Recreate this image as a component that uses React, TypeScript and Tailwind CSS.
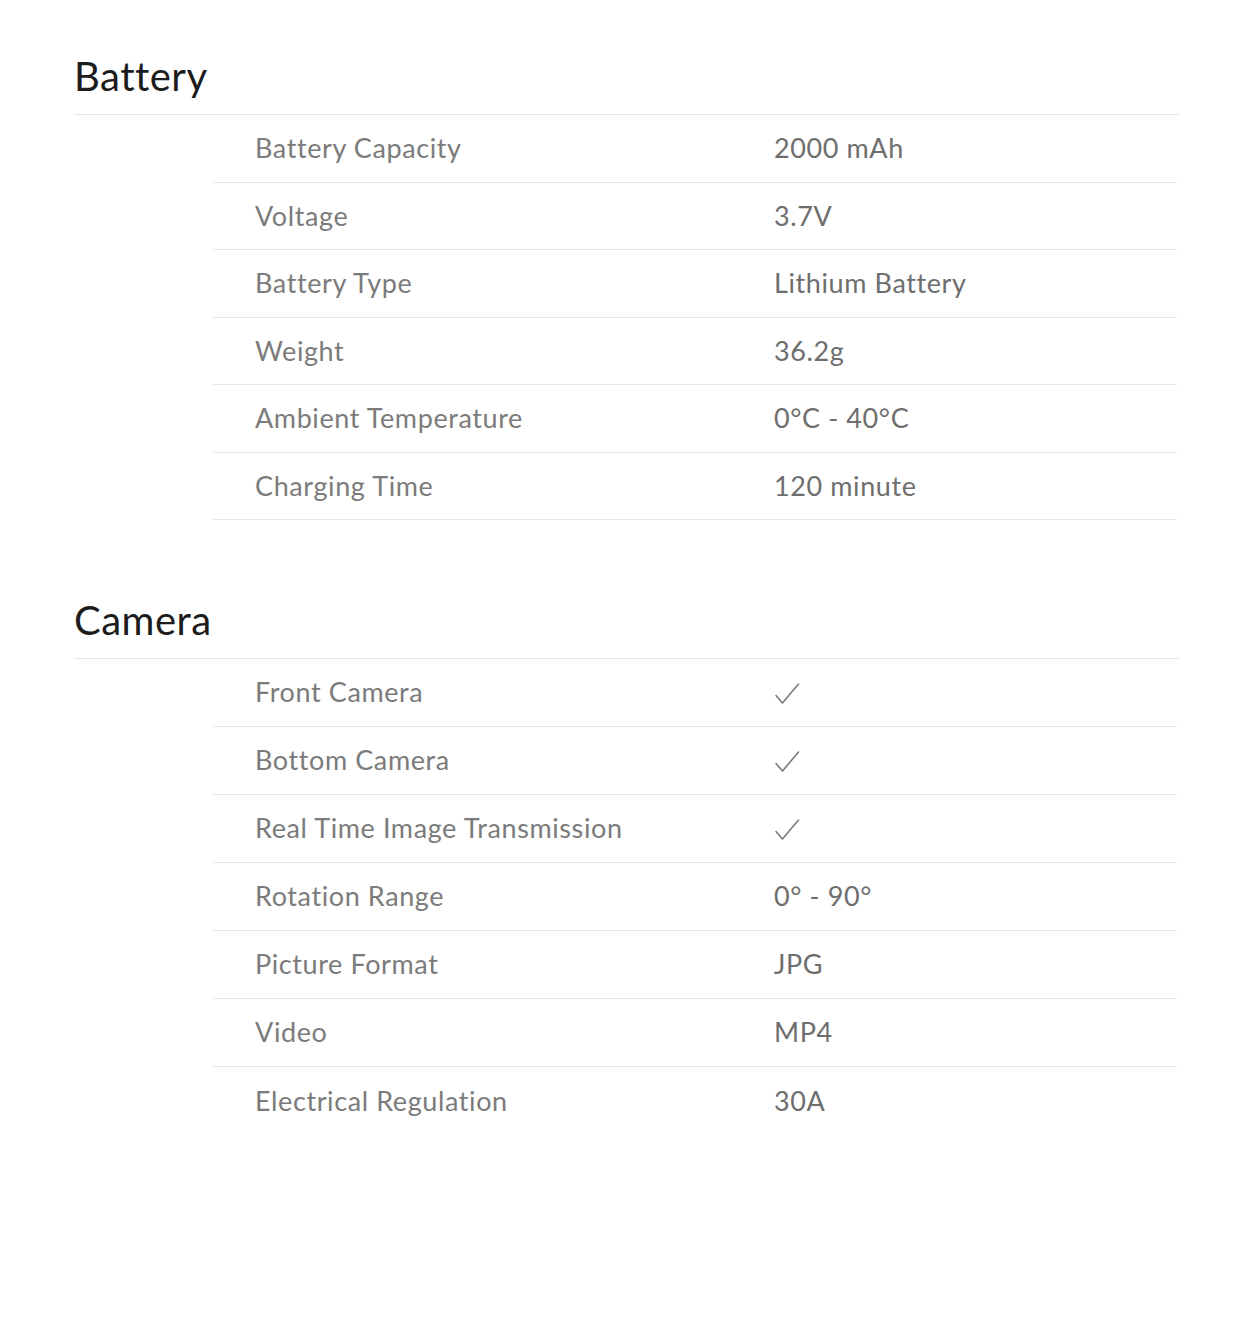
import React from "react";

type Spec = { label: string; value: string | null };

const battery: Spec[] = [
  { label: "Battery Capacity", value: "2000 mAh" },
  { label: "Voltage", value: "3.7V" },
  { label: "Battery Type", value: "Lithium Battery" },
  { label: "Weight", value: "36.2g" },
  { label: "Ambient Temperature", value: "0°C - 40°C" },
  { label: "Charging Time", value: "120 minute" },
];

// null value = check mark
const camera: Spec[] = [
  { label: "Front Camera", value: null },
  { label: "Bottom Camera", value: null },
  { label: "Real Time Image Transmission", value: null },
  { label: "Rotation Range", value: "0° - 90°" },
  { label: "Picture Format", value: "JPG" },
  { label: "Video", value: "MP4" },
  { label: "Electrical Regulation", value: "30A" },
];

function Check() {
  return (
    <svg width="26" height="24" viewBox="0 0 26 24" fill="none" className="mt-[2px]">
      <path
        d="M2 13.5 L8.5 21 L24.5 2"
        stroke="#7a7a7a"
        strokeWidth="1.6"
        strokeLinecap="round"
        strokeLinejoin="round"
      />
    </svg>
  );
}

function Section({
  title,
  rows,
  rowHeight,
  lastLine,
  className,
}: {
  title: string;
  rows: Spec[];
  rowHeight: string;
  lastLine: boolean;
  className?: string;
}) {
  return (
    <section className={className}>
      {/* Heading */}
      <h2 className="border-b border-[#e6e6e6] pb-[15px] text-[40px] leading-[45px] tracking-[0.5px] text-[#1c1c1c]">
        {title}
      </h2>

      {/* Rows */}
      <div className="ml-[139px] mr-[2px]">
        {rows.map((row, index) => (
          <div
            key={index}
            className={`flex ${rowHeight} items-center ${
              index < rows.length - 1 || lastLine ? "border-b border-[#e6e6e6]" : ""
            }`}
          >
            <div className="w-[561px] pl-[42px] text-[27px] tracking-[0.6px] text-[#7b7b7b]">
              {row.label}
            </div>
            <div className="text-[27px] tracking-[0.6px] text-[#6e6e6e]">
              {row.value ?? <Check />}
            </div>
          </div>
        ))}
      </div>
    </section>
  );
}

export default function App() {
  return (
    <div
      className="min-h-[1344px] w-[1240px] bg-white pt-[54px]"
      style={{ fontFamily: "Lato, 'Noto Sans', sans-serif" }}
    >
      <div className="ml-[74px] w-[1105px]">
        <Section title="Battery" rows={battery} rowHeight="h-[67.5px]" lastLine={true} />
        <Section
          title="Camera"
          rows={camera}
          rowHeight="h-[68px]"
          lastLine={false}
          className="mt-[78px]"
        />
      </div>
    </div>
  );
}
